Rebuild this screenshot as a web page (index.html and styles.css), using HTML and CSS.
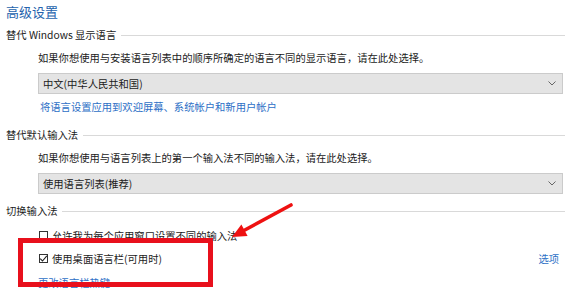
FILE: index.html
```html
<!DOCTYPE html>
<html lang="zh-CN">
<head>
<meta charset="utf-8">
<title>高级设置</title>
<link rel="stylesheet" href="styles.css">
</head>
<body>
<div class="page">
  <h1 class="title">高级设置</h1>

  <div class="group-head"><span>替代 Windows 显示语言</span><i class="rule"></i></div>
  <p class="desc">如果你想使用与安装语言列表中的顺序所确定的语言不同的显示语言，请在此处选择。</p>
  <div class="select"><span>中文(中华人民共和国)</span><svg class="chev" width="8" height="5" viewBox="0 0 8 5"><path d="M0.5 0.5 L4 4 L7.5 0.5" fill="none" stroke="#666" stroke-width="1"/></svg></div>
  <a class="link link-first">将语言设置应用到欢迎屏幕、系统帐户和新用户帐户</a>

  <div class="group-head gap"><span>替代默认输入法</span><i class="rule"></i></div>
  <p class="desc">如果你想使用与语言列表上的第一个输入法不同的输入法，请在此处选择。</p>
  <div class="select"><span>使用语言列表(推荐)</span><svg class="chev" width="8" height="5" viewBox="0 0 8 5"><path d="M0.5 0.5 L4 4 L7.5 0.5" fill="none" stroke="#666" stroke-width="1"/></svg></div>

  <div class="group-head gap"><span>切换输入法</span><i class="rule"></i></div>
  <div class="check-row first-check"><span class="box"></span><span>允许我为每个应用窗口设置不同的输入法</span></div>
  <div class="check-row"><span class="box checked"><svg width="9" height="9" viewBox="0 0 9 9"><path d="M1.2 4.6 L3.5 7 L7.8 1.8" fill="none" stroke="#222" stroke-width="1.1"/></svg></span><span class="grow">使用桌面语言栏(可用时)</span><a class="opt">选项</a></div>
  <a class="link link-last">更改语言栏热键</a>
</div>

<div class="highlight"></div>
<svg class="arrow" width="565" height="291" viewBox="0 0 565 291">
  <path d="M291 205 L243 231" stroke="#ee1111" stroke-width="3.6" stroke-linecap="round" fill="none"/>
  <polygon points="232,237 241.4,224.6 247.6,236" fill="#ee1111"/>
</svg>
</body>
</html>
```
FILE: styles.css
```css
html, body {
  margin: 0;
  padding: 0;
  background: #ffffff;
}
body {
  width: 565px;
  height: 291px;
  overflow: hidden;
  position: relative;
  font-family: "Noto Sans CJK SC", "Noto Sans", sans-serif;
  font-size: 10.3px;
  color: #1b1b1b;
}
.page {
  padding-left: 6px;
  display: flex;
  flex-direction: column;
}
.title {
  margin: 0;
  font-size: 13px;
  font-weight: normal;
  line-height: 24px;
  height: 24px;
  color: #2563ad;
}
.group-head {
  display: flex;
  align-items: center;
  height: 22px;
  line-height: 22px;
  white-space: nowrap;
}
.group-head.gap {
  margin-top: 6px;
}
.rule {
  flex: 1;
  height: 0;
  border-top: 1px solid #d9d9d9;
  margin-left: 5px;
}
.desc {
  margin: 1px 0 0 32px;
  height: 22px;
  line-height: 22px;
  white-space: nowrap;
}
.select {
  margin: 4px 2px 0 32px;
  height: 21px;
  box-sizing: border-box;
  background: #e4e4e4;
  border: 1px solid #cbcbcb;
  display: flex;
  align-items: center;
  justify-content: space-between;
  padding: 0 6px 0 4px;
}
.chev {
  display: block;
}
.link {
  color: #2d6fc6;
  margin-left: 34px;
  height: 22px;
  line-height: 22px;
  white-space: nowrap;
}
.link-first {
  margin-top: 2px;
}
.link-last {
  margin-left: 32px;
  margin-top: 2px;
}
.check-row {
  display: flex;
  align-items: center;
  height: 23px;
  margin-left: 33px;
  white-space: nowrap;
}
.first-check {
  margin-top: 2px;
}
.box {
  width: 9px;
  height: 9px;
  border: 1px solid #333;
  box-sizing: border-box;
  margin-right: 4px;
  display: flex;
  align-items: center;
  justify-content: center;
  position: relative;
}
.box.checked svg {
  position: absolute;
  left: -1px;
  top: -1px;
}
.grow {
  flex: 1;
}
.opt {
  color: #2d6fc6;
  margin-right: 6px;
}
.highlight {
  position: absolute;
  left: 18px;
  top: 238px;
  width: 195px;
  height: 49px;
  box-sizing: border-box;
  border: 5px solid #e8101c;
}
.arrow {
  position: absolute;
  left: 0;
  top: 0;
  pointer-events: none;
}
```
